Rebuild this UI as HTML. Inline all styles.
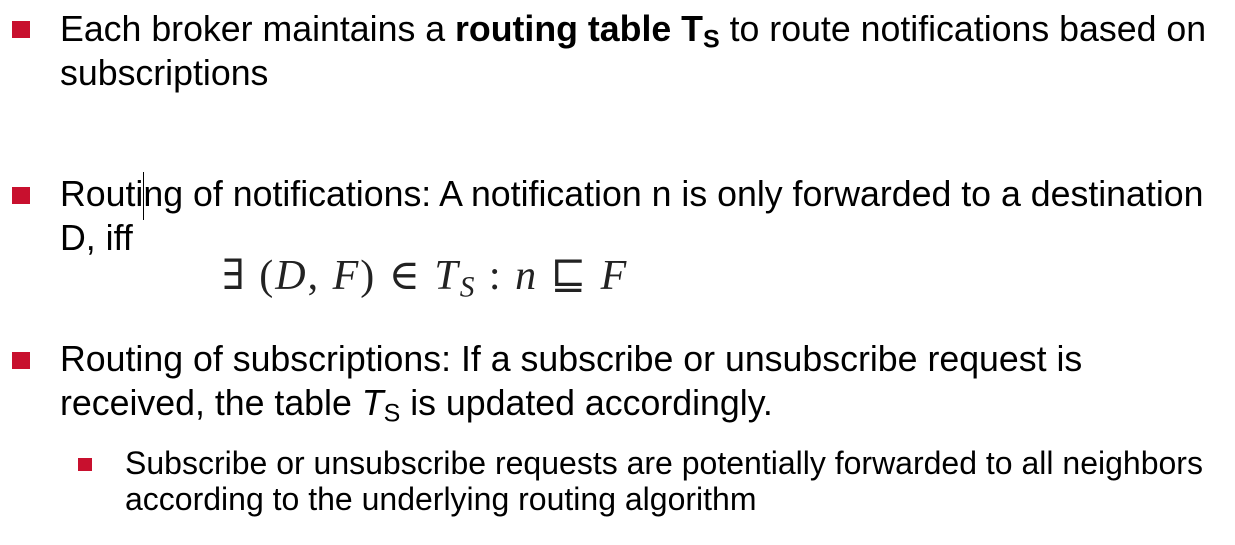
<!DOCTYPE html>
<html><head><meta charset="utf-8"><style>
html,body{margin:0;padding:0;background:#fff;width:1235px;height:545px;overflow:hidden;position:relative}
.l{position:absolute;font-family:"Liberation Sans",Arial,sans-serif;color:#000;white-space:nowrap;line-height:1;transform-origin:left top}
.m{font-size:36px;left:60px;transform:scaleX(0.992)}
.s{font-size:32px;left:125px}
.b{position:absolute;background:#c8102e}
sub{font-size:0.7em;vertical-align:-0.25em;line-height:0}
.f{position:absolute;left:222px;top:255px;font-family:"Liberation Serif","DejaVu Serif",serif;font-size:42px;letter-spacing:2px;color:#222;white-space:nowrap;line-height:1}
.f i{font-style:italic}
</style></head><body>
<div class="b" style="left:12px;top:21px;width:18px;height:17px"></div>
<div class="l m" style="top:11px">Each broker maintains a <b>routing table T<sub>S</sub></b> to route notifications based on</div>
<div class="l m" style="top:55px">subscriptions</div>

<div class="b" style="left:12px;top:187px;width:18px;height:17px"></div>
<div class="l m" style="top:176px">Routing of notifications: A notification n is only forwarded to a destination</div>
<div class="l m" style="top:220px">D, iff</div>
<div style="position:absolute;left:143px;top:172px;width:1px;height:48px;background:#000"></div>
<div class="f">∃ (<i>D</i>, <i>F</i>) ∈ <i>T<sub style="font-size:0.7em">S</sub></i> : <i>n</i> ⊑ <i>F</i></div>

<div class="b" style="left:12px;top:352px;width:18px;height:17px"></div>
<div class="l m" style="top:341px">Routing of subscriptions: If a subscribe or unsubscribe request is</div>
<div class="l m" style="top:385px">received, the table <i>T</i><sub>S</sub> is updated accordingly.</div>

<div class="b" style="left:78px;top:458px;width:14px;height:13px"></div>
<div class="l s" style="top:447px">Subscribe or unsubscribe requests are potentially forwarded to all neighbors</div>
<div class="l s" style="top:483px">according to the underlying routing algorithm</div>
</body></html>
